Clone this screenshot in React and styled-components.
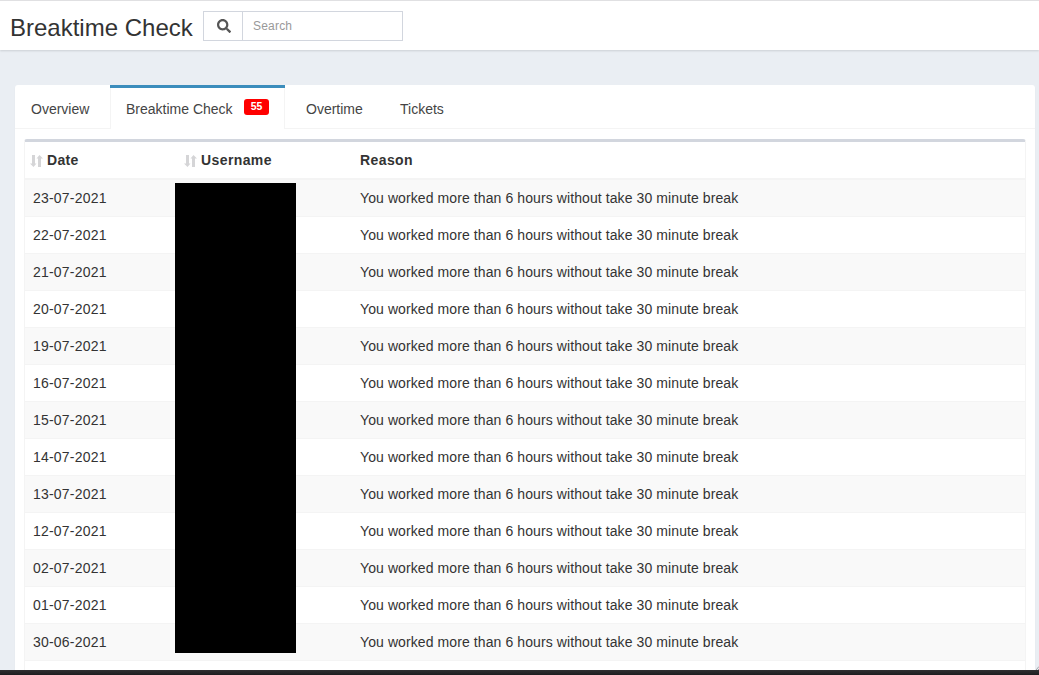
import React from "react";
import styled, { createGlobalStyle } from "styled-components";

const GlobalStyle = createGlobalStyle`
  *, *::before, *::after { box-sizing: border-box; }
  body {
    margin: 0;
    overflow: hidden;
    background: #eaeef3;
    color: #333;
    font: 14px/20px "Liberation Sans", Arial, sans-serif;
  }
`;

const Screen = styled.div`
  display: flex;
  flex-direction: column;
  height: 675px;
`;

const Header = styled.header`
  display: flex;
  flex: none;
  align-items: flex-start;
  gap: 10px;
  height: 50px;
  padding: 10px 10px 0;
  background: #fff;
  border-top: 1px solid #e0e0e2;
  box-shadow: 0 1px 2px rgba(0, 0, 0, 0.13);
`;

const Title = styled.h1`
  width: 183px;
  margin: 0;
  font-size: 24px;
  font-weight: 400;
  line-height: 33px;
  white-space: nowrap;
`;

const SearchGroup = styled.div`
  display: flex;
  width: 200px;
  height: 30px;
  border: 1px solid #d2d6de;
`;

const SearchButton = styled.button`
  display: flex;
  align-items: center;
  justify-content: center;
  width: 39px;
  padding: 0 0 0 1px;
  background: #fff;
  border: 0;
  border-right: 1px solid #d2d6de;
`;

const SearchInput = styled.input`
  flex: 1;
  min-width: 0;
  padding: 0 10px;
  border: 0;
  background: #fff;
  font: 12px "Liberation Sans", Arial, sans-serif;
  letter-spacing: 0.2px;
  &::placeholder { color: #999; opacity: 1; }
`;

const Content = styled.main`
  flex: 1;
  min-height: 0;
  padding: 35px 4px 0 15px;
  overflow: hidden;
`;

const Card = styled.section`
  height: 100%;
  background: #fff;
  border-radius: 3px 3px 0 0;
  box-shadow: 0 1px 1px rgba(0, 0, 0, 0.1);
`;

const Tabs = styled.nav`
  display: flex;
  height: 44px;
  border-bottom: 1px solid #f4f4f4;
`;

const Tab = styled.a`
  display: flex;
  flex: none;
  width: ${(p) => p.$width}px;
  height: 44px;
  padding: ${(p) => (p.$active ? "11px 16px 0" : "14px 16px 0")};
  color: #444;
  white-space: nowrap;
  ${(p) =>
    p.$active &&
    `margin-right: 5px;
     background: #fff;
     border-top: 3px solid #3c8dbc;
     box-shadow: inset 1px 0 #f4f4f4, inset -1px 0 #f4f4f4;`}
`;

const Badge = styled.span`
  width: 25px;
  height: 16px;
  margin-left: auto;
  border-radius: 3px;
  background: #f00;
  color: #fff;
  font-size: 10.5px;
  font-weight: 700;
  line-height: 15px;
  text-align: center;
`;

const TableBox = styled.div`
  width: 1002px;
  margin: 10px 0 0 9px;
  border: 1px solid #f4f4f4;
  border-top: 3px solid #d2d6de;
  border-radius: 3px;
`;

const Row = styled.div`
  display: grid;
  grid-template-columns: 150px 177px 1fr;
  height: 37px;
  padding: 8px 8px 0;
  border-top: 1px solid #f4f4f4;
  background: ${(p) => (p.$striped ? "#f9f9f9" : "#fff")};
`;

const HeadRow = styled(Row)`
  height: 38px;
  border-top: 0;
  border-bottom: 2px solid #f4f4f4;
  font-weight: 700;
  & + ${Row} { height: 36px; border-top: 0; }
`;

const Cell = styled.span`
  white-space: nowrap;
  letter-spacing: ${(p) => p.$spacing || "0"};
`;

const SortCell = styled(Cell)`
  display: flex;
  gap: 4px;
  margin-left: ${(p) => p.$shift}px;
`;

const TableArea = styled.div`
  position: relative;
`;

const Redaction = styled.div`
  position: absolute;
  top: 44px;
  left: 160px;
  width: 121px;
  height: 470px;
  background: #000;
`;

const BottomBar = styled.footer`
  position: relative;
  flex: none;
  height: 5px;
  background: linear-gradient(#303032, #1d1d1f);
`;

const Grip = styled.svg`
  position: absolute;
  right: 0;
  top: -4px;
  width: 3px;
  height: 4px;
`;

const SortGlyph = styled.svg`
  flex: none;
  width: 13px;
  height: 12px;
  margin: 5px 0 0 -1px;
  fill: #d5d5d7;
`;

function SortIcon() {
  return (
    <SortGlyph viewBox="0 0 13 12">
      <path d="M2 0H5V8.500H6.500L3.500 12 0 8.500H2z" />
      <path d="M9.500 0L13 3.500H11V12H8V3.500H6.500z" />
    </SortGlyph>
  );
}

function SearchIcon() {
  return (
    <svg width="14" height="14" viewBox="0 0 512 512" fill="#555">
      <path d="M505 442.7L405.3 343c-4.500-4.500-10.600-7-17-7H372c27.600-35.300 44-79.700 44-128C416 93.100 322.900 0 208 0S0 93.100 0 208s93.100 208 208 208c48.300 0 92.700-16.400 128-44v16.300c0 6.400 2.500 12.500 7 17l99.700 99.700c9.400 9.400 24.600 9.400 33.900 0l28.300-28.300c9.400-9.400 9.400-24.600.1-34zM208 336c-70.700 0-128-57.200-128-128 0-70.700 57.200-128 128-128 70.700 0 128 57.200 128 128 0 70.700-57.200 128-128 128z" />
    </svg>
  );
}

const dates = [
  "23-07-2021", "22-07-2021", "21-07-2021", "20-07-2021", "19-07-2021",
  "16-07-2021", "15-07-2021", "14-07-2021", "13-07-2021", "12-07-2021",
  "02-07-2021", "01-07-2021", "30-06-2021",
];

export default function App() {
  return (
    <Screen>
      <GlobalStyle />
      <Header>
        <Title>Breaktime Check</Title>
        <SearchGroup>
          <SearchButton aria-label="Search"><SearchIcon /></SearchButton>
          <SearchInput placeholder="Search" />
        </SearchGroup>
      </Header>
      <Content>
        <Card>
          <Tabs>
            <Tab $width={95}>Overview</Tab>
            <Tab $width={175} $active>
              Breaktime Check <Badge>55</Badge>
            </Tab>
            <Tab $width={94}>Overtime</Tab>
            <Tab $width={80}>Tickets</Tab>
          </Tabs>
          <TableArea>
            <TableBox>
              <HeadRow>
                <SortCell $shift={-2} $spacing="0.3px"><SortIcon />Date</SortCell>
                <SortCell $shift={2} $spacing="0.4px"><SortIcon />Username</SortCell>
                <Cell $spacing="0.4px">Reason</Cell>
              </HeadRow>
              {dates.map((date, i) => (
                <Row key={date} $striped={i % 2 === 0}>
                  <Cell $spacing="0.2px">{date}</Cell>
                  <span />
                  <Cell $spacing="0.093px">You worked more than 6 hours without take 30 minute break</Cell>
                </Row>
              ))}
              <Row />
            </TableBox>
            <Redaction />
          </TableArea>
        </Card>
      </Content>
      <BottomBar>
        <Grip viewBox="0 0 3 4">
          <path d="M0 4L3 0.500M2 4L3 3" stroke="#8a8c90" strokeWidth="0.8" />
        </Grip>
      </BottomBar>
    </Screen>
  );
}
